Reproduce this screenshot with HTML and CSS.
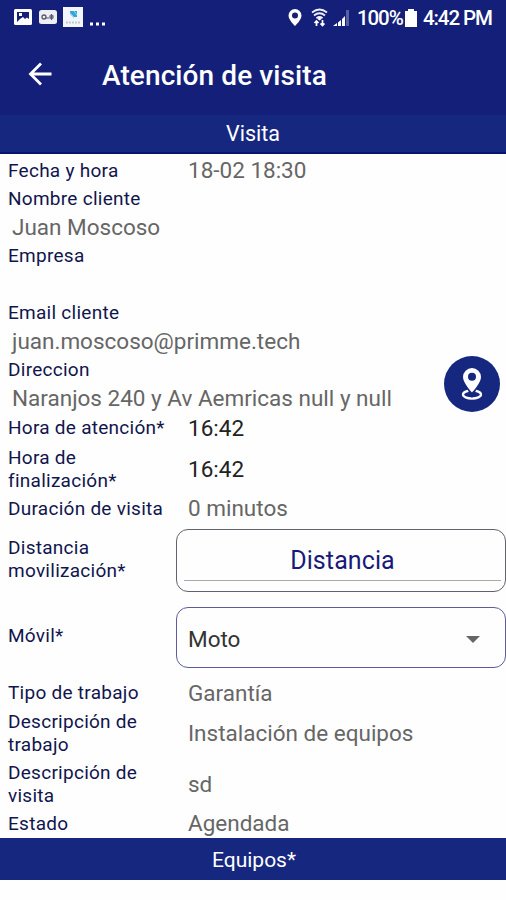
FILE: index.html
```html
<!DOCTYPE html>
<html lang="es">
<head>
  <meta charset="UTF-8">
  <meta name="viewport" content="width=device-width, initial-scale=1.0">
  <title>Atención de visita</title>
  <link rel="stylesheet" href="styles.css">
</head>
<body>

<header class="top">
  <div class="status">
    <svg class="notifications" width="94" height="22" viewBox="0 0 94 22">
      <rect x="0" y="2" width="18" height="16" rx="1.5" fill="#fff"/>
      <path d="M3 5h12v7l-2-1.500-2 1.500-2-2-3 2-3 3z" fill="#141f79"/>
      <rect x="5" y="6" width="3" height="3" fill="#fff"/>
      <rect x="25" y="3" width="18" height="14" rx="2.5" fill="#eeeef5"/>
      <circle cx="30" cy="10" r="2" fill="none" stroke="#55586f" stroke-width="1.3"/>
      <circle cx="37.500" cy="10" r="2.400" fill="#777a91"/>
      <path d="M31 11h4M37.500 7v6" stroke="#55586f"/>
      <rect x="49" y="0" width="20" height="20" fill="#f2f6fa"/>
      <path d="M56 4h7v6h-3l-4-4z" fill="#35a5dc"/>
      <path d="M56 7l4 4M60 4l3 4" stroke="#9bd8f2"/>
      <path d="M52 15.500h15" stroke="#c5c9ce" stroke-width="2" stroke-dasharray="2 1"/>
      <path d="M76 17h3M82 17h3M88 17h3" stroke="#fff" stroke-width="3"/>
    </svg>
    <div class="system">
      <svg width="64" height="20" viewBox="0 0 64 20">
        <path fill-rule="evenodd" d="M7 1a6.500 6.500 0 0 0-6.500 6.500C.5 12 7 18 7 18s6.500-6 6.500-10.500A6.500 6.500 0 0 0 7 1zM7 4.500a3 3 0 1 1 0 6 3 3 0 0 1 0-6z" fill="#fff"/>
        <path d="M24 4.500q7.500-6 15 0M26 7.500q5.500-4.500 11 0M28.500 10.300q3-2.500 6 0" fill="none" stroke="#eeeefa" stroke-width="1.800"/>
        <path d="M31.500 9l2 2-2 1.500-2-1.500z" fill="#fff"/>
        <path d="M28.500 18v-5M26.500 15l2-2 2 2M34.500 12v5M32.500 15.500l2 2 2-2" fill="none" stroke="#fff" stroke-width="1.700"/>
        <path d="M45 18l4-3v3zM50 14.500l3-2.500v6h-3zM54 11l3-3v10h-3z" fill="#fff"/>
        <path d="M59.500 2v16" stroke="#5960a2" stroke-width="3"/>
      </svg>
      <span class="percent">100%</span>
      <svg class="battery" width="12" height="18" viewBox="0 0 12 18">
        <path d="M3 0h6v2h3v16H0V2h3z" fill="#fff"/>
      </svg>
      <span class="clock">4:42 PM</span>
    </div>
  </div>
  <div class="toolbar">
    <svg class="back" width="24" height="24" viewBox="0 0 24 24">
      <path d="M13 1.500L2.500 12 13 22.500M2.500 12H23.500" fill="none" stroke="#fff" stroke-width="2.800"/>
    </svg>
    <h1 class="title">Atención de visita</h1>
  </div>
</header>

<div class="section">Visita</div>

<main class="form">
  <div class="row"><span class="label">Fecha y hora</span><span class="value">18-02 18:30</span></div>
  <div class="row"><span class="label">Nombre cliente</span></div>
  <div class="row"><span class="value full">Juan Moscoso</span></div>
  <div class="row"><span class="label">Empresa</span></div>
  <div class="row"></div>
  <div class="row"><span class="label">Email cliente</span></div>
  <div class="row"><span class="value full">juan.moscoso@primme.tech</span></div>
  <div class="row"><span class="label">Direccion</span></div>
  <div class="row">
    <span class="value full">Naranjos 240 y Av Aemricas null y null</span>
    <button class="map" aria-label="Mapa">
      <svg width="22" height="34" viewBox="0 0 22 34">
        <ellipse cx="11" cy="27.500" rx="9" ry="4" fill="none" stroke="#fff" stroke-width="2.300"/>
        <path d="M11 28l-4-8h8z" fill="#162780" stroke="#162780" stroke-width="3"/>
        <path fill-rule="evenodd" d="M11 1a9 9 0 0 0-9 9c0 6 9 15.500 9 15.500S20 16 20 10a9 9 0 0 0-9-9zM11 5.700a4 4 0 1 1 0 8 4 4 0 0 1 0-8z" fill="#fff"/>
      </svg>
    </button>
  </div>
  <div class="row time"><span class="label">Hora de atención*</span><span class="value dark">16:42</span></div>
  <div class="row double"><span class="label">Hora de<br>finalización*</span><span class="value dark">16:42</span></div>
  <div class="row"><span class="label">Duración de visita</span><span class="value">0 minutos</span></div>
  <div class="row distance">
    <span class="label">Distancia<br>movilización*</span>
    <div class="field"><div class="input">Distancia</div></div>
  </div>
  <div class="row mobile">
    <span class="label">Móvil*</span>
    <div class="field select">
      <span>Moto</span>
      <svg width="14" height="7" viewBox="0 0 14 7"><path d="M0 0h14L7 7z" fill="#666"/></svg>
    </div>
  </div>
  <div class="row"><span class="label">Tipo de trabajo</span><span class="value">Garantía</span></div>
  <div class="row double"><span class="label">Descripción de<br>trabajo</span><span class="value">Instalación de equipos</span></div>
  <div class="row double"><span class="label">Descripción de<br>visita</span><span class="value">sd</span></div>
  <div class="row"><span class="label">Estado</span><span class="value">Agendada</span></div>
</main>

<div class="section bottom">Equipos*</div>

</body>
</html>
```
FILE: styles.css
```css
* {
  box-sizing: border-box;
}

body {
  margin: 0;
  height: 900px;
  overflow: hidden;
  background: #fefefe;
  font-family: Roboto, sans-serif;
}

svg {
  display: block;
  flex: none;
}

.top {
  height: 115px;
  background: #141f79;
  color: #fff;
}

.status {
  height: 36px;
  padding: 0 14px;
  display: flex;
  justify-content: space-between;
  align-items: center;
}

.system {
  display: flex;
  align-items: center;
  font-size: 20.5px;
  font-weight: 500;
  line-height: 24px;
}

.percent {
  width: 45px;
  margin-left: 5px;
  letter-spacing: -1.1px;
}

.battery {
  margin: 0 6px 0 3px;
}

.clock {
  width: 69px;
  white-space: nowrap;
  letter-spacing: -1.1px;
}

.toolbar {
  height: 76px;
  padding-left: 28px;
  display: flex;
  align-items: center;
}

.title {
  margin: 3px 0 0 50px;
  font-size: 28px;
  font-weight: 500;
  letter-spacing: 0.1px;
}

.section {
  height: 39px;
  border-bottom: 2px solid #08146c;
  background: #162780;
  color: #fff;
  font-size: 21.5px;
  line-height: 38px;
  text-align: center;
}

.section.bottom {
  height: 42px;
  padding-left: 2px;
  line-height: 44px;
  font-size: 21px;
  border: none;
}

.form {
  height: 684px;
  padding: 1.5px 0 0 8px;
}

.row {
  height: 28.5px;
  display: flex;
  align-items: center;
}

.label {
  width: 180px;
  flex: none;
  padding-top: 1px;
  color: #11154d;
  font-size: 19px;
  line-height: 23px;
  letter-spacing: 0.27px;
}

.value {
  padding-top: 1px;
  color: #666;
  font-size: 22.5px;
  line-height: 26px;
  white-space: nowrap;
}

.value.dark {
  color: #222;
}

.value.full {
  padding-left: 4px;
}

.map {
  width: 56px;
  height: 56px;
  margin: -28px 6px 0 auto;
  padding: 0;
  flex: none;
  display: flex;
  align-items: center;
  justify-content: center;
  border: none;
  border-radius: 50%;
  background: #162780;
}

.time {
  height: 30.5px;
}

.double {
  height: 51px;
}

.distance {
  height: 77px;
}

.mobile {
  height: 79px;
  padding-bottom: 2px;
}

.distance .label,
.mobile .label {
  width: 168px;
  padding: 0 0 4px;
}

.field {
  height: 63px;
  flex: 1;
  padding: 0 4px 11px 7px;
  border: 1.5px solid #62626c;
  border-radius: 12px;
}

.input {
  height: 51px;
  border-bottom: 1.5px solid #aaa;
  color: #181a79;
  font-size: 25px;
  line-height: 62px;
  text-align: center;
  letter-spacing: 0.1px;
}

.field.select {
  height: 61px;
  padding: 3px 25px 0 11px;
  display: flex;
  align-items: center;
  justify-content: space-between;
  border-color: #5d5c99;
  color: #333;
  font-size: 22.5px;
}
```
